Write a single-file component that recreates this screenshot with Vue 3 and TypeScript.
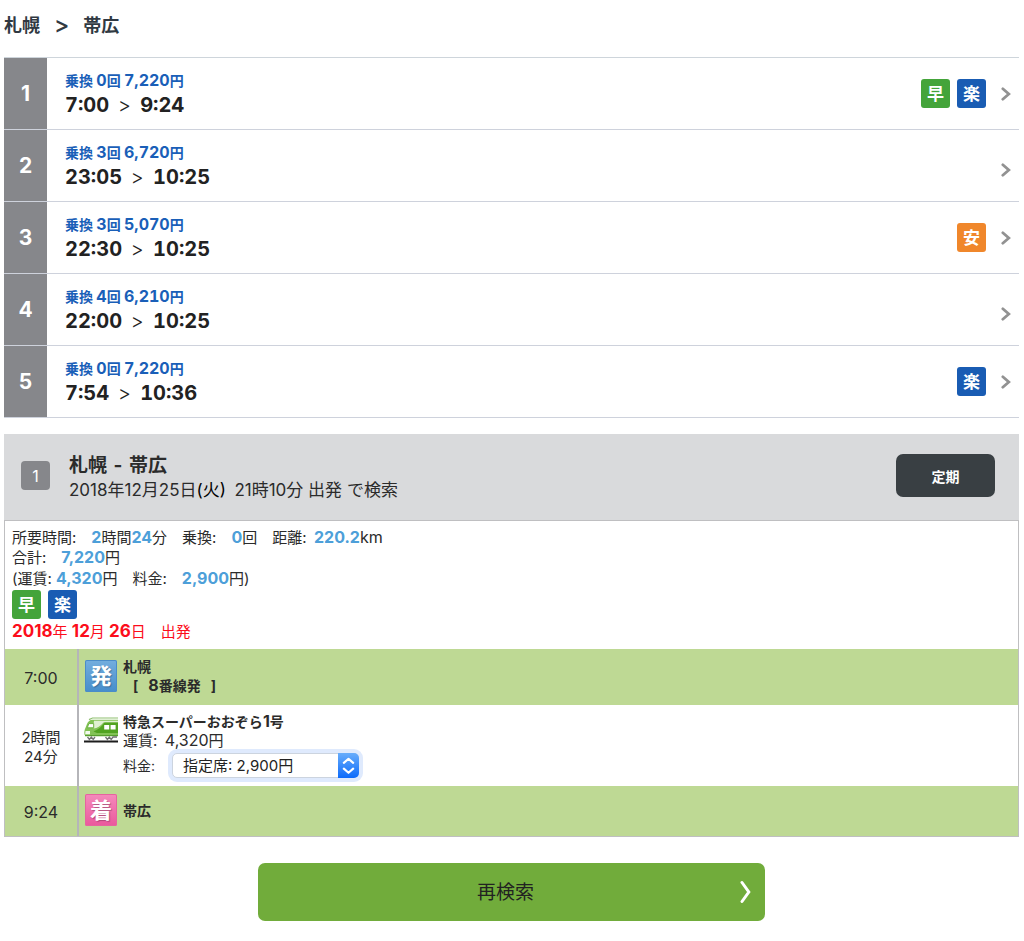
<script setup lang="ts">
import { ref } from 'vue'

type Mark = '早' | '楽' | '安'

interface Route {
  transfers: number
  fare: string
  depart: string
  arrive: string
  marks: Mark[]
}

const markClass: Record<Mark, string> = { 早: 'fast', 楽: 'easy', 安: 'cheap' }

const routes: Route[] = [
  { transfers: 0, fare: '7,220', depart: '7:00', arrive: '9:24', marks: ['早', '楽'] },
  { transfers: 3, fare: '6,720', depart: '23:05', arrive: '10:25', marks: [] },
  { transfers: 3, fare: '5,070', depart: '22:30', arrive: '10:25', marks: ['安'] },
  { transfers: 4, fare: '6,210', depart: '22:00', arrive: '10:25', marks: [] },
  { transfers: 0, fare: '7,220', depart: '7:54', arrive: '10:36', marks: ['楽'] },
]

const seat = ref('reserved')
</script>

<template>
  <main class="page">
    <h1 class="title"><span>札幌</span><span class="to">&gt;</span><span>帯広</span></h1>

    <ol class="routes">
      <li v-for="(route, i) in routes" :key="i">
        <a class="route" href="#detail">
          <span class="rank">{{ i + 1 }}</span>
          <span class="info">
            <span class="meta">乗換 <b>{{ route.transfers }}</b>回 <b>{{ route.fare }}</b>円</span>
            <span class="times"><b>{{ route.depart }}</b><span class="gt">&gt;</span><b>{{ route.arrive }}</b></span>
          </span>
          <span class="side" :class="{ bare: !route.marks.length }">
            <span v-for="m in route.marks" :key="m" class="mark" :class="markClass[m]">{{ m }}</span>
            <svg class="chev" viewBox="0 0 10 14" aria-hidden="true"><path d="M1.8 1.8 7.8 7 1.8 12.2" /></svg>
          </span>
        </a>
      </li>
    </ol>

    <section id="detail" class="detail">
      <header class="head">
        <span class="num">1</span>
        <div class="headtext">
          <h2>札幌 <span class="dash">-</span> 帯広</h2>
          <p>2018年12月25日<span class="dark">(火)</span>&ensp;21時10分 出発 で検索</p>
        </div>
        <button type="button" class="pass">定期</button>
      </header>

      <div class="body">
        <div class="summary">
          <p>所要時間:&emsp;<b>2</b>時間<b>24</b>分&emsp;乗換:&emsp;<b>0</b>回&emsp;距離:&ensp;<b>220.2</b><i>km</i></p>
          <p>合計:&emsp;<b>7,220</b>円</p>
          <p class="split">(運賃: <b>4,320</b>円&emsp;料金:&emsp;<b>2,900</b>円)</p>
          <div class="marks">
            <span class="mark fast">早</span>
            <span class="mark easy">楽</span>
          </div>
          <p class="date"><b>2018</b>年 <b>12</b>月 <b>26</b>日&emsp;出発</p>
        </div>

        <table class="legs">
          <tbody>
            <tr class="station">
              <th scope="row"><i>7:00</i></th>
              <td>
                <div class="leg">
                  <span class="stop dep">発</span>
                  <div class="name">札幌<br /><span class="track"><span>[</span><span><i>8</i>番線発</span><span>]</span></span></div>
                </div>
              </td>
            </tr>
            <tr class="ride">
              <th scope="row">2時間<br />24分</th>
              <td>
                <div class="leg top">
                  <svg class="train" viewBox="0 0 34 26" aria-hidden="true">
                    <path d="M5 2.6 8.5 1H34" fill="none" stroke="#8fbf70" stroke-width="1.2" />
                    <path d="M34 2.8H8.5Q4.5 3 3 7L.8 12.5Q0 15 .4 17.5 1 19 3 19H34Z" fill="#82c255" />
                    <path d="M10 3.8H34V5.4H19.5Q15 10.6 9.6 11.6V7Z" fill="#dff0d2" />
                    <path d="M4.8 6.6H9.7V10.8H3.3Z" fill="#fff" stroke="#6fb344" />
                    <path d="M34 5.6H20.5Q17 11.6 9.5 14.4L13 16H34Z" fill="#51a321" />
                    <path d="M1.5 14H6V17.2H1.2Z" fill="#f3faed" />
                    <path d="M20.2 8H25.2V12.6H20.2ZM26.6 8H31.6V12.6H26.6Z" fill="#fff" />
                    <path d="M1 18.6H34" stroke="#579e2f" stroke-width="1.2" />
                    <path d="M3.5 20 5.4 22.4 7.3 20 9.2 22.4 11 20M21.5 20 23.4 22.4 25.3 20 27.2 22.4 29 20H33" fill="none" stroke="#717171" stroke-width="1.3" />
                    <path d="M0 24.5H34" stroke="#1d1d1d" stroke-width="2" />
                  </svg>
                  <div class="fares">
                    <strong>特急スーパーおおぞら<i>1</i>号</strong>
                    <span>運賃:&ensp;<i>4,320</i>円</span>
                    <div class="seatrow">
                      <label for="seat">料金:</label>
                      <span class="picker">
                        <select id="seat" v-model="seat">
                          <option value="reserved">指定席: 2,900円</option>
                        </select>
                        <svg viewBox="0 0 20 24" aria-hidden="true"><path d="M5.5 9.5 10 5.5 14.5 9.5M5.5 15 10 19 14.5 15" /></svg>
                      </span>
                    </div>
                  </div>
                </div>
              </td>
            </tr>
            <tr class="station last">
              <th scope="row"><i>9:24</i></th>
              <td>
                <div class="leg">
                  <span class="stop arr">着</span>
                  <div class="name">帯広</div>
                </div>
              </td>
            </tr>
          </tbody>
        </table>
      </div>
    </section>

    <button type="button" class="again">
      再検索
      <svg viewBox="0 0 12 24" aria-hidden="true"><path d="M2 2.5 8.8 12 2 21.5" /></svg>
    </button>
  </main>
</template>

<style>
body {
  margin: 0;
  background: #fff;
}
</style>

<style scoped>
.page {
  padding: 13px 5px 20px 4px;
  font-family: Inter, "Noto Sans CJK JP", sans-serif;
  font-size: 14px;
  color: #2b2b2b;
}
h1, h2, p, ol {
  margin: 0;
  padding: 0;
  list-style: none;
}
i {
  font-style: normal;
  font-size: 16px;
  line-height: 1;
}
.title {
  display: flex;
  gap: 14px;
  margin-bottom: 18px;
  font-size: 18px;
  line-height: 26px;
  font-weight: 600;
  color: #303942;
}
.to {
  font-size: 23px;
  line-height: 24px;
  font-weight: 500;
}
.routes {
  border-top: 1px solid #ced5db;
}
.routes li {
  border-bottom: 1px solid #ced2dc;
}
.route {
  display: flex;
  min-height: 71px;
  color: #222;
  text-decoration: none;
}
.rank {
  flex: none;
  display: flex;
  align-items: center;
  justify-content: center;
  width: 43px;
  background: #86878b;
  color: #fff;
  font-size: 21px;
  font-weight: 700;
}
.info {
  flex: 1;
  display: flex;
  flex-direction: column;
  justify-content: center;
  padding-left: 18px;
}
.meta {
  line-height: 22px;
  font-size: 14px;
  font-weight: 700;
  color: #1a5fb8;
}
.meta b {
  font-size: 16px;
  line-height: 1;
  font-weight: 700;
  font-variant-numeric: tabular-nums;
}
.times {
  display: flex;
  align-items: center;
  gap: 9px;
  font-size: 20px;
  line-height: 26px;
  font-variant-numeric: tabular-nums;
}
.gt {
  font-weight: 300;
}
.side {
  display: flex;
  align-items: center;
  gap: 7px;
  padding-right: 8px;
}
.bare {
  padding-top: 8px;
}
.mark {
  display: flex;
  align-items: center;
  justify-content: center;
  width: 29px;
  height: 29px;
  border-radius: 3px;
  color: #fff;
  font-size: 17px;
  line-height: 20px;
  font-weight: 700;
}
.fast { background: #44a43a; }
.easy { background: #195cb3; }
.cheap { background: #f0872b; }
.chev {
  width: 10px;
  height: 14px;
  margin-left: 8px;
  fill: none;
  stroke: #929292;
  stroke-width: 2.8;
  stroke-linecap: round;
}
.detail {
  margin-top: 16px;
}
.head {
  display: flex;
  align-items: center;
  min-height: 86px;
  padding: 0 24px 3px 17px;
  background: #d9dadc;
  box-sizing: border-box;
}
.num {
  display: flex;
  align-items: center;
  justify-content: center;
  width: 29px;
  height: 29px;
  border-radius: 4px;
  background: #86878b;
  color: #fff;
  font-size: 16px;
}
.headtext {
  flex: 1;
  padding: 3px 0 0 19px;
}
h2 {
  font-size: 19px;
  line-height: 26px;
  font-weight: 700;
}
.dash {
  padding: 0 2px;
}
.headtext p {
  font-size: 17px;
  line-height: 22px;
}
.dark {
  color: #000;
}
.pass {
  width: 99px;
  height: 43px;
  border: 0;
  border-radius: 7px;
  background: #393f43;
  color: #fff;
  font: inherit;
  font-weight: 700;
}
.body {
  border: 1px solid #bfbfc1;
}
.summary {
  padding: 7px 8px 5px 7px;
}
.summary p {
  font-size: 15px;
  line-height: 20px;
}
.summary b {
  font-size: 16px;
  line-height: 1;
  color: #4d9fd9;
}
.summary .split {
  line-height: 22px;
}
.marks {
  display: flex;
  gap: 7px;
}
.summary .date {
  line-height: 25px;
}
.summary .date, .summary .date b {
  color: #fc0d1b;
}
.summary .date b {
  font-size: 17px;
}
.legs {
  width: 100%;
  border-collapse: collapse;
  font-size: 14px;
  line-height: 19px;
}
.legs th {
  width: 72px;
  padding: 2px 0 0;
  border-right: 2px solid #b5b5b9;
  font-size: 15px;
  font-weight: 400;
}
.legs td {
  padding: 0 6px;
}
.station {
  height: 56px;
  background: #bed994;
}
.ride {
  height: 81px;
}
.last {
  height: 50px;
}
.leg {
  display: flex;
  align-items: center;
  gap: 6px;
  padding-bottom: 2px;
}
.top {
  align-items: flex-start;
}
.stop {
  display: flex;
  align-items: center;
  justify-content: center;
  width: 32px;
  height: 32px;
  border-radius: 2px;
  color: #fff;
  font-size: 22px;
  font-weight: 700;
  text-shadow: 1px 1px 1px rgba(0, 0, 0, 0.25);
}
.dep {
  background: linear-gradient(#74aede, #468dcb);
  box-shadow: inset 0 0 0 1px #4b8cc8;
}
.arr {
  background: linear-gradient(#f48bbb, #ea589c);
  box-shadow: inset 0 0 0 1px #e5649f;
}
.name {
  font-weight: 700;
}
.track {
  display: flex;
  gap: 10px;
  padding-left: 10px;
}
.train {
  flex: none;
  width: 34px;
  height: 26px;
  margin-left: -1px;
  margin-top: 5px;
}
.fares {
  display: flex;
  flex-direction: column;
  margin-left: -1px;
}
.fares > span {
  font-size: 15px;
}
.seatrow {
  display: flex;
  align-items: center;
  gap: 17px;
  margin-top: 3px;
}
.picker {
  position: relative;
  display: flex;
}
.picker select {
  width: 187px;
  height: 25px;
  padding: 0 24px 0 10px;
  border: 1px solid #ccd4df;
  border-radius: 5px;
  outline: none;
  box-shadow: 0 0 0 4px #dfeafd;
  appearance: none;
  background: #fff;
  color: #222;
  font: inherit;
  font-size: 15px;
}
.picker svg {
  position: absolute;
  top: 0;
  right: 0;
  width: 21px;
  height: 25px;
  border-radius: 0 5px 5px 0;
  background: linear-gradient(#68adfb, #0d6bfb);
  fill: none;
  stroke: #fff;
  stroke-width: 2;
  stroke-linecap: round;
  stroke-linejoin: round;
  pointer-events: none;
}
.again {
  position: relative;
  display: block;
  width: 50%;
  height: 58px;
  margin: 26px auto 0;
  padding: 0 12px 3px 0;
  border: 0;
  border-radius: 7px;
  background: #71ac3b;
  color: #222;
  font: inherit;
  font-size: 19px;
}
.again svg {
  position: absolute;
  right: 13px;
  top: 17px;
  width: 12px;
  height: 24px;
  fill: none;
  stroke: #fff;
  stroke-width: 3;
  stroke-linecap: round;
}
</style>
